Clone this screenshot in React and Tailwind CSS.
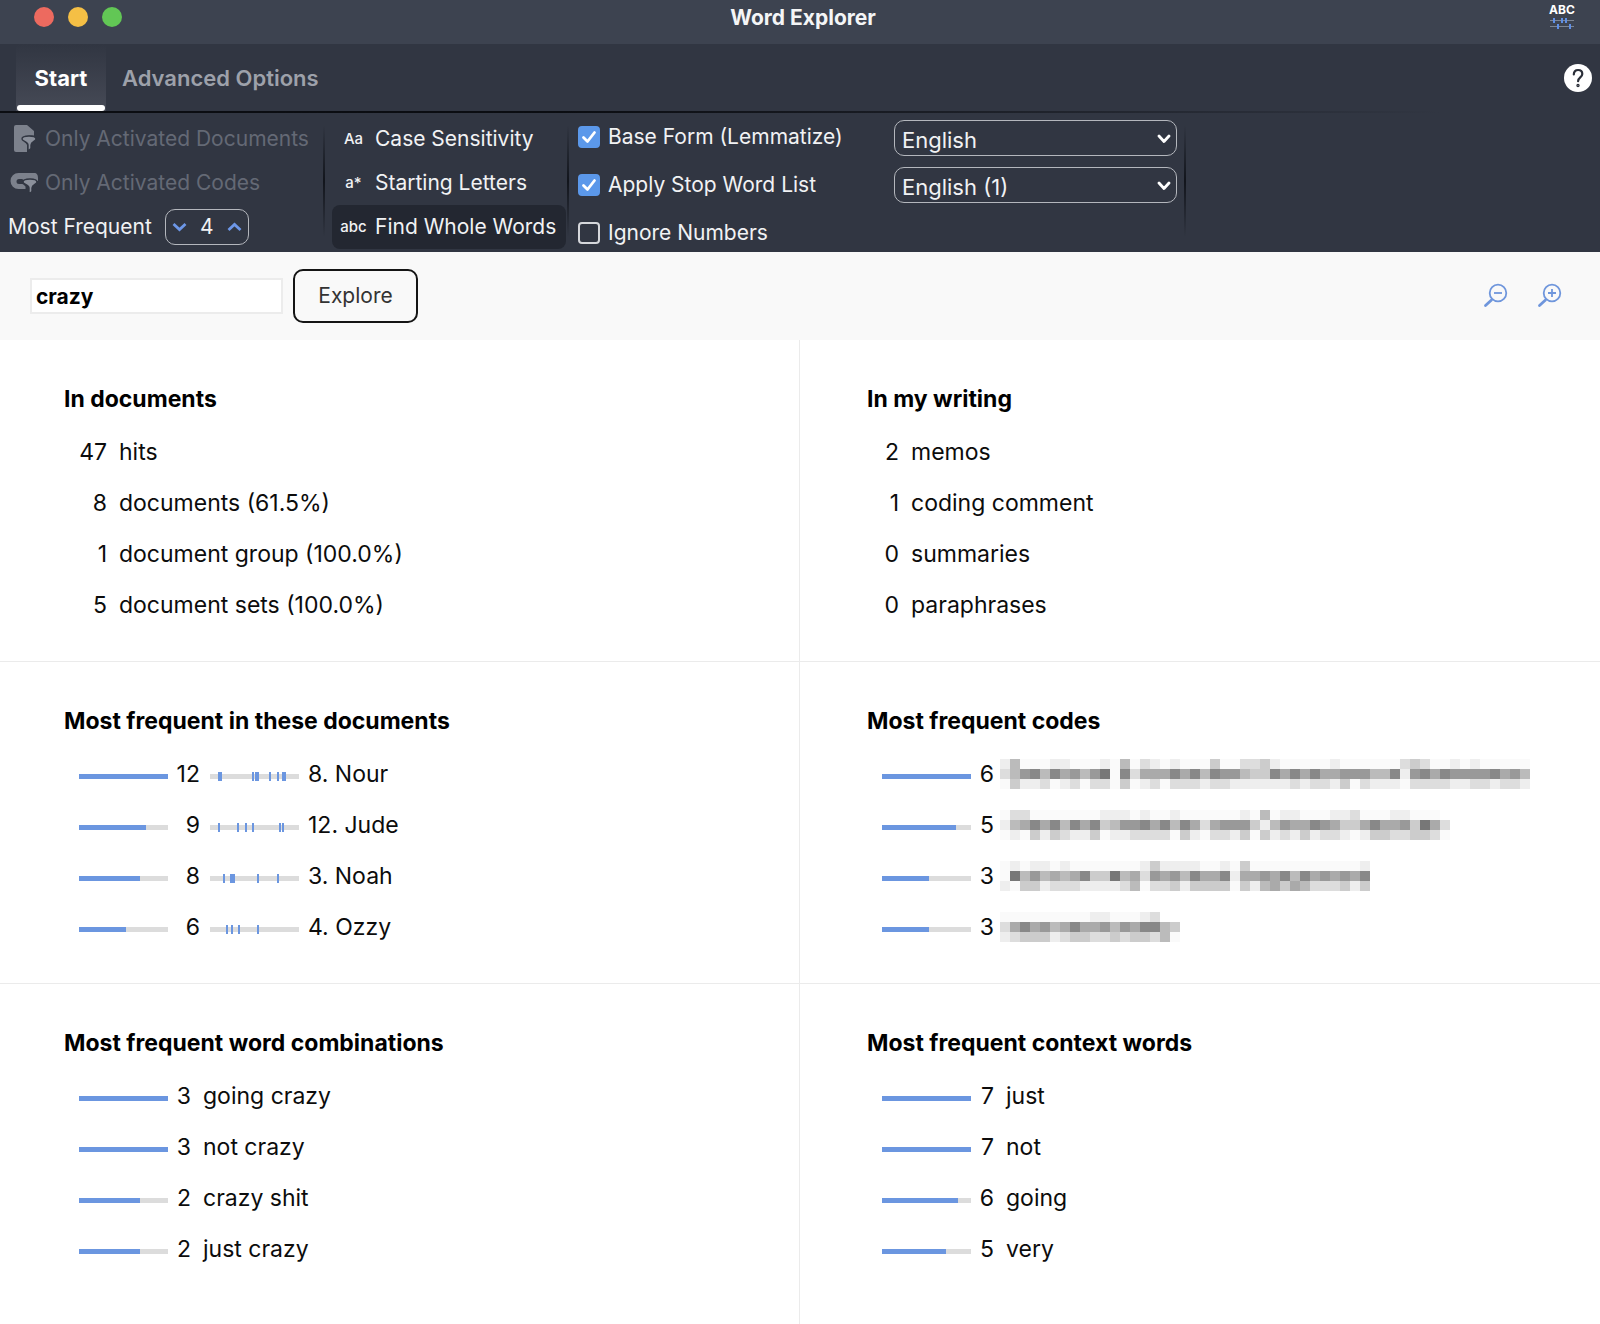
import React from "react";

function Funnel({ x, y }) {
  return (
    <path
      transform={`translate(${x} ${y})`}
      d="M0 3C0 1 3 0 7 0s7 1 7 3c0 2.500-5 2.500-5 6v3.500L6 15V9C6 5.500 0 5.500 0 3z"
      fill="#8b909b"
      stroke="#313642"
      strokeWidth="1.400"
    />
  );
}

function DocIcon() {
  return (
    <svg width="26" height="30" viewBox="0 0 26 30" aria-hidden="true" className="shrink-0">
      <path fill="#7c818c" d="M4 1h11l7 6v4.500c-6-.5-11 .5-11 3.500 0 3 3.500 3.500 4 6v7H4a2 2 0 0 1-2-2V3a2 2 0 0 1 2-2z" />
      <Funnel x={10} y={12} />
    </svg>
  );
}

function CodeIcon() {
  return (
    <svg width="30" height="24" viewBox="0 0 30 24" aria-hidden="true" className="shrink-0">
      <path fill="#7c818c" d="M8.500 2H24c3 0 4 2 4 5v3H14.500c-1-1.500-2-2-3.500-2H9a2.500 2.500 0 0 0 0 5h3c1.500 0 2.500 1.500 3.500 2.500V18H8.500a8 8 0 0 1 0-16z" />
      <Funnel x={13} y={8} />
    </svg>
  );
}

function AppGlyph() {
  return (
    <svg width="26" height="14" viewBox="0 0 26 14" aria-hidden="true">
      <path stroke="#7d8592" strokeWidth="1" d="M1 4.500h24M1 10.500h24" />
      <path stroke="#5f8fe6" strokeWidth="2" d="M5 2v5M13 2v5M17 2v5M9 8v5M21 8v5" />
    </svg>
  );
}

function Magnifier({ plus }) {
  return (
    <svg width="26" height="26" viewBox="0 0 26 26" fill="none" stroke="#6f96dc" aria-hidden="true">
      <circle cx="15" cy="10" r="8.300" strokeWidth="1.800" />
      <path strokeWidth="2.800" strokeLinecap="round" d="M8.500 17 2.500 22.500" />
      <path strokeWidth="1.800" d={plus ? "M11 10h8M15 6v8" : "M11 10h8"} />
    </svg>
  );
}

function Divider() {
  return <div className="mt-3 h-28 w-[2px] shrink-0 bg-linear-to-b from-transparent via-[#12151c] to-transparent" />;
}

function ToggleButton({ glyph, label, active }) {
  return (
    <button
      type="button"
      aria-pressed={!!active}
      className={
        "flex h-11 items-center rounded-lg text-[21px] leading-8 whitespace-nowrap text-[#f1f2f4] " +
        (active ? "bg-[#232731]" : "")
      }
    >
      <span className="w-[43px] text-center text-[15px] font-medium leading-6">{glyph}</span>
      <span>{label}</span>
    </button>
  );
}

function Check({ id, label, checked }) {
  return (
    <label htmlFor={id} className="flex h-8 items-center gap-2 text-[21px] leading-8 text-[#f1f2f4]">
      <span className="grid h-[22px] w-[22px] place-items-center">
        <input
          id={id}
          type="checkbox"
          defaultChecked={checked}
          className="peer col-start-1 row-start-1 h-[22px] w-[22px] appearance-none rounded border-2 border-[#d5d7db] checked:border-[#5b98ea] checked:bg-[#5b98ea]"
        />
        <svg viewBox="0 0 22 22" className="pointer-events-none col-start-1 row-start-1 hidden h-[22px] w-[22px] peer-checked:block" fill="none" stroke="white" strokeWidth="2.800" strokeLinecap="round" strokeLinejoin="round" aria-hidden="true">
          <path d="M5.500 11.500 9.500 15.500 16.500 6.500" />
        </svg>
      </span>
      {label}
    </label>
  );
}

function Dropdown({ label, value }) {
  return (
    <div className="grid h-9 w-[283px]">
      <select
        aria-label={label}
        defaultValue={value}
        className="col-start-1 row-start-1 h-9 w-full appearance-none rounded-[10px] border border-[#b4b7bd] bg-transparent px-[7px] pt-[3px] text-[22px] leading-8 text-[#f1f2f4]"
      >
        <option>{value}</option>
      </select>
      <svg viewBox="0 0 14 10" className="pointer-events-none col-start-1 row-start-1 mr-[6px] h-[10px] w-[14px] self-center justify-self-end" fill="none" stroke="white" strokeWidth="2.800" strokeLinecap="round" strokeLinejoin="round" aria-hidden="true">
        <path d="M2 3l5 5.500L12 3" />
      </svg>
    </div>
  );
}

function Bar({ percent }) {
  return (
    <div className="mt-[5px] h-[5px] w-[89px] shrink-0 bg-[#dcdcdc]">
      <div className="h-full bg-[#6b96e0]" style={{ width: `${percent}%` }} />
    </div>
  );
}

function Hits({ marks }) {
  return (
    <svg width="89" height="9" viewBox="0 0 89 9" aria-hidden="true" className="mt-[5px] shrink-0">
      <rect y="2" width="89" height="5" fill="#dcdcdc" />
      {marks.map(([x, w]) => (
        <rect key={x} x={x} width={w} height="9" fill="#6b96e0" />
      ))}
    </svg>
  );
}

function Redacted({ rows }) {
  return (
    <svg width="530" height="30" viewBox="0 0 530 30" shapeRendering="crispEdges" role="img" aria-label="Redacted code name" className="shrink-0">
      {rows.map((row, y) =>
        [...row].map((c, x) => {
          const v = parseInt(c, 16) * 17 - (c === "f" ? 5 : 0);
          return <rect key={`${x}-${y}`} x={x * 10} y={y * 10} width="10" height="10" fill={`rgb(${v},${v},${v})`} />;
        })
      )}
    </svg>
  );
}

function Panel({ title, children, right, last }) {
  return (
    <section
      className={
        "border-[#ebebeb] pt-[43px] pb-[31px] " +
        (right ? "pl-[67px] " : "border-r pl-16 ") +
        (last ? "" : "border-b")
      }
    >
      <h2 className="mb-[11px] text-[23px] font-bold leading-8 text-black">{title}</h2>
      <ul>{children}</ul>
    </section>
  );
}

const rowClass = "flex h-[51px] items-center text-[23px] leading-8 text-[#0c0c0c]";

function CountRow({ count, label, wide }) {
  return (
    <li className={rowClass}>
      <span className={(wide ? "w-[43px]" : "w-8") + " text-right"}>{count}</span>
      <span className="ml-3">{label}</span>
    </li>
  );
}

function BarRow({ percent, count, children }) {
  return (
    <li className={rowClass + " pl-[15px]"}>
      <Bar percent={percent} />
      <span className="ml-2 w-[15px] text-right">{count}</span>
      {children}
    </li>
  );
}

const documents = [
  { percent: 100, count: 12, name: "8. Nour", marks: [[8, 4], [42, 2], [45, 4], [59, 2], [67, 2], [72, 4]] },
  { percent: 75, count: 9, name: "12. Jude", marks: [[8, 2], [27, 2], [35, 2], [42, 2], [69, 2], [72, 2]] },
  { percent: 68, count: 8, name: "3. Noah", marks: [[13, 2], [20, 5], [47, 2], [67, 2]] },
  { percent: 53, count: 6, name: "4. Ozzy", marks: [[16, 2], [21, 2], [28, 2], [47, 2]] },
];

const codes = [
  {
    percent: 100,
    count: 6,
    rows: [
      "ebfffeefffefbfdefefffcffddcefffffeffffffdcdffefefffff",
      "db98b8a9b97f8daaa8a8b899bcc8a8a8aa999bb8e98a899998a9b",
      "fceedfedfddfcfedfdddeddeeeeeededdecfdeeefddddeeddedde",
    ],
  },
  {
    percent: 83,
    count: 5,
    rows: [
      "fddfffffffeeefeffeffffffefbfeefffeedfffeefff",
      "eba8a8b8a8cb998a8b8ada999ceb9aa89acca8aa9c7ad",
      "fefcecdeecfeeddddfcefddecfcedeceddefeccddccdf",
    ],
  },
  {
    percent: 53,
    count: 3,
    rows: [
      "fefeefefffffffeceeeeffefcfffffffffffe",
      "f7b9baba8cc7bad9a9b8aa8eaa9a8b8a9a9a8",
      "efccedddeeeedbfddceccccfcebacabdddcec",
    ],
  },
  {
    percent: 53,
    count: 3,
    rows: ["fffffffffeefffed", "da8a9ba8aa9b9a88bc", "edcccedccddcdccdbf"],
  },
];

const combinations = [
  [100, 3, "going crazy"],
  [100, 3, "not crazy"],
  [68, 2, "crazy shit"],
  [68, 2, "just crazy"],
];

const contextWords = [
  [100, 7, "just"],
  [100, 7, "not"],
  [85, 6, "going"],
  [72, 5, "very"],
];

export default function App() {
  return (
    <div className="flex min-h-screen flex-col bg-white font-[Inter,sans-serif]">
      <header className="grid h-11 grid-cols-[1fr_auto_1fr] bg-[#3d4350]">
        <div className="flex gap-[14px] pt-[7px] pl-[34px]">
          <button type="button" aria-label="Close" className="h-5 w-5 rounded-full bg-[#ed6a5f]" />
          <button type="button" aria-label="Minimize" className="h-5 w-5 rounded-full bg-[#f5bf45]" />
          <button type="button" aria-label="Zoom window" className="h-5 w-5 rounded-full bg-[#62c755]" />
        </div>
        <h1 className="pt-[2px] pl-[6px] text-[21px] font-bold leading-8 text-[#f4f5f6]">Word Explorer</h1>
        <div className="flex flex-col items-center justify-self-end pt-[3px] pr-[25px] text-[12px] font-bold leading-[13px] text-white">
          ABC
          <AppGlyph />
        </div>
      </header>

      <nav className="flex h-[67px] items-stretch justify-between bg-[#313642] pl-4">
        <div className="flex" role="tablist">
          <button type="button" role="tab" aria-selected="true" className="flex w-[90px] flex-col items-center justify-between bg-linear-to-b from-[#313642] to-[#464a56] px-px pt-[18px] text-[22px] font-bold leading-8 text-white">
            Start
            <span className="h-[6px] w-full rounded-[3px] bg-white" />
          </button>
          <button type="button" role="tab" aria-selected="false" className="ml-4 text-[22px] font-semibold leading-8 text-[#9da1aa]">
            Advanced Options
          </button>
        </div>
        <button type="button" aria-label="Help" className="mt-5 mr-2 grid h-7 w-7 place-items-center rounded-full bg-white">
          <svg viewBox="0 0 28 28" className="h-7 w-7" fill="none" stroke="#2b2f39" strokeWidth="2.200" strokeLinecap="round" aria-hidden="true">
            <path d="M9.800 10.500c0-2.800 1.800-4.500 4.300-4.500s4.200 1.600 4.200 4c0 3.400-4.200 3.500-4.200 7.200" />
            <circle cx="14" cy="21.500" r=".6" fill="#2b2f39" />
          </svg>
        </button>
      </nav>
      <div className="h-[2px] bg-linear-to-r from-[#0b0d12] from-35% to-[#313642] to-90%" />

      <div className="flex h-[139px] bg-[#313642]">
        <div className="flex w-[323px] flex-col pt-[4px] text-[21px] leading-8">
          <button type="button" disabled className="flex h-11 items-center gap-[7px] pl-3 text-[#646975]">
            <DocIcon />
            Only Activated Documents
          </button>
          <button type="button" disabled className="flex h-11 items-center gap-[5px] pl-[10px] text-[#646975]">
            <CodeIcon />
            Only Activated Codes
          </button>
          <div className="flex h-11 items-center pl-2 text-[#f1f2f4]">
            <label htmlFor="frequent">Most Frequent</label>
            <div className="ml-[13px] flex h-9 w-[84px] items-center justify-between rounded-[10px] border border-[#b4b7bd] px-[6px]">
              <button type="button" aria-label="Decrease">
                <svg width="15" height="10" viewBox="0 0 15 10" fill="none" stroke="#6d97e8" strokeWidth="2.800" aria-hidden="true"><path d="M1.500 2l6 5.500L13.500 2" /></svg>
              </button>
              <input id="frequent" defaultValue="4" className="w-6 bg-transparent text-center" />
              <button type="button" aria-label="Increase">
                <svg width="15" height="10" viewBox="0 0 15 10" fill="none" stroke="#6d97e8" strokeWidth="2.800" aria-hidden="true"><path d="M1.500 8l6-5.500 6 5.500" /></svg>
              </button>
            </div>
          </div>
        </div>
        <Divider />
        <div className="ml-[7px] flex w-[235px] flex-col pt-[4px] pr-px">
          <ToggleButton glyph="Aa" label="Case Sensitivity" />
          <ToggleButton glyph="a*" label="Starting Letters" />
          <ToggleButton glyph="abc" label="Find Whole Words" active />
        </div>
        <Divider />
        <div className="ml-[9px] flex w-[316px] flex-col gap-4 pt-[8px]">
          <Check id="lemma" label="Base Form (Lemmatize)" checked />
          <Check id="stop" label="Apply Stop Word List" checked />
          <Check id="numbers" label="Ignore Numbers" />
        </div>
        <div className="flex flex-col gap-[11px] pt-[7px] pr-[7px]">
          <Dropdown label="Lemmatization language" value="English" />
          <Dropdown label="Stop word list" value="English (1)" />
        </div>
        <Divider />
      </div>

      <form className="flex h-[88px] items-center bg-[#f9f9f9] pr-[37px] pl-[30px]" onSubmit={(e) => e.preventDefault()}>
        <input aria-label="Search word" defaultValue="crazy" className="h-9 w-[253px] border-2 border-[#ececec] bg-white px-1 text-[21px] font-bold leading-8 text-black" />
        <button type="submit" className="ml-[10px] h-[54px] w-[125px] rounded-[10px] border-2 border-[#151515] text-[21px] leading-8 text-[#333]">
          Explore
        </button>
        <div className="ml-auto flex gap-7">
          <button type="button" aria-label="Zoom out"><Magnifier /></button>
          <button type="button" aria-label="Zoom in"><Magnifier plus /></button>
        </div>
      </form>

      <main className="grid flex-1 grid-cols-2 grid-rows-[auto_auto_1fr]">
        <Panel title="In documents">
          <CountRow wide count={47} label="hits" />
          <CountRow wide count={8} label="documents (61.5%)" />
          <CountRow wide count={1} label="document group (100.0%)" />
          <CountRow wide count={5} label="document sets (100.0%)" />
        </Panel>
        <Panel title="In my writing" right>
          <CountRow count={2} label="memos" />
          <CountRow count={1} label="coding comment" />
          <CountRow count={0} label="summaries" />
          <CountRow count={0} label="paraphrases" />
        </Panel>
        <Panel title="Most frequent in these documents">
          {documents.map((d) => (
            <li key={d.name} className={rowClass + " pl-[15px]"}>
              <Bar percent={d.percent} />
              <span className="mr-[10px] w-8 text-right">{d.count}</span>
              <Hits marks={d.marks} />
              <span className="ml-[9px]">{d.name}</span>
            </li>
          ))}
        </Panel>
        <Panel title="Most frequent codes" right>
          {codes.map((c, i) => (
            <BarRow key={i} percent={c.percent} count={c.count}>
              <span className="ml-[6px]"><Redacted rows={c.rows} /></span>
            </BarRow>
          ))}
        </Panel>
        <Panel title="Most frequent word combinations" last>
          {combinations.map(([percent, count, word]) => (
            <BarRow key={word} percent={percent} count={count}>
              <span className="ml-3">{word}</span>
            </BarRow>
          ))}
        </Panel>
        <Panel title="Most frequent context words" right last>
          {contextWords.map(([percent, count, word]) => (
            <BarRow key={word} percent={percent} count={count}>
              <span className="ml-3">{word}</span>
            </BarRow>
          ))}
        </Panel>
      </main>
    </div>
  );
}
